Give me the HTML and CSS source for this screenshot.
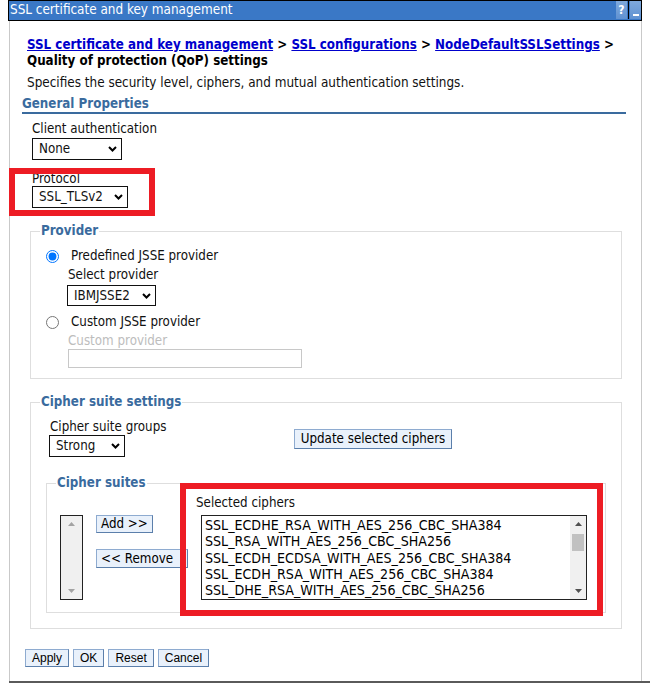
FILE: index.html
```html
<!DOCTYPE html>
<html>
<head>
<meta charset="utf-8">
<title>Quality of protection (QoP) settings</title>
<link rel="stylesheet" href="styles.css">
</head>
<body>
<div class="window">
  <div class="titlebar">
    <span class="title">SSL certificate and key management</span>
    <span class="tb-btns">
      <span class="tb-btn">?</span>
      <span class="tb-sep"></span>
      <span class="tb-btn"><span class="minbar"></span></span>
    </span>
  </div>
  <div class="content">
    <div class="crumbs"><a class="link">SSL certificate and key management</a> &gt; <a class="link">SSL configurations</a> &gt; <a class="link">NodeDefaultSSLSettings</a> &gt;<br><span class="cur">Quality of protection (QoP) settings</span></div>
    <p class="desc">Specifies the security level, ciphers, and mutual authentication settings.</p>
    <h2 class="section">General Properties</h2>

    <div class="field f-client">
      <div class="label">Client authentication</div>
      <div class="select w-none"><span>None</span><svg class="chev" width="9" height="6" viewBox="0 0 9 6"><path d="M1 1l3.5 3.5L8 1" fill="none" stroke="#000" stroke-width="2"/></svg></div>
    </div>

    <div class="field f-protocol">
      <div class="label">Protocol</div>
      <div class="select w-proto"><span>SSL_TLSv2</span><svg class="chev" width="9" height="6" viewBox="0 0 9 6"><path d="M1 1l3.5 3.5L8 1" fill="none" stroke="#000" stroke-width="2"/></svg></div>
      <div class="annot a1"></div>
    </div>

    <fieldset class="box provider">
      <legend>Provider</legend>
      <div class="radio-row"><input type="radio" name="prov" checked><span>Predefined JSSE provider</span></div>
      <div class="sub">
        <div class="label">Select provider</div>
        <div class="select w-ibm"><span>IBMJSSE2</span><svg class="chev" width="9" height="6" viewBox="0 0 9 6"><path d="M1 1l3.5 3.5L8 1" fill="none" stroke="#000" stroke-width="2"/></svg></div>
      </div>
      <div class="radio-row r2"><input type="radio" name="prov"><span>Custom JSSE provider</span></div>
      <div class="sub">
        <div class="label disabled">Custom provider</div>
        <div class="textbox"></div>
      </div>
    </fieldset>

    <fieldset class="box ciphers">
      <legend>Cipher suite settings</legend>
      <div class="groups-row">
        <div class="groups">
          <div class="label">Cipher suite groups</div>
          <div class="select w-strong"><span>Strong</span><svg class="chev" width="9" height="6" viewBox="0 0 9 6"><path d="M1 1l3.5 3.5L8 1" fill="none" stroke="#000" stroke-width="2"/></svg></div>
        </div>
        <button class="btn update">Update selected ciphers</button>
      </div>

      <fieldset class="box suites">
        <legend>Cipher suites</legend>
        <div class="suites-grid">
          <div class="listbox empty">
            <div class="sbar full">
              <svg class="arr" width="7" height="4" viewBox="0 0 7 4"><path d="M0 4h7L3.5 0z" fill="#a3a3a3"/></svg>
              <svg class="arr" width="7" height="4" viewBox="0 0 7 4"><path d="M0 0h7L3.5 4z" fill="#a3a3a3"/></svg>
            </div>
          </div>
          <div class="move-btns">
            <button class="btn small">Add &gt;&gt;</button>
            <button class="btn small remove">&lt;&lt; Remove</button>
          </div>
          <div class="selected-col">
            <div class="label">Selected ciphers</div>
            <div class="listbox sel">
              <div class="options">
                <div>SSL_ECDHE_RSA_WITH_AES_256_CBC_SHA384</div>
                <div>SSL_RSA_WITH_AES_256_CBC_SHA256</div>
                <div>SSL_ECDH_ECDSA_WITH_AES_256_CBC_SHA384</div>
                <div>SSL_ECDH_RSA_WITH_AES_256_CBC_SHA384</div>
                <div>SSL_DHE_RSA_WITH_AES_256_CBC_SHA256</div>
              </div>
              <div class="sbar">
                <svg class="arr" width="7" height="4" viewBox="0 0 7 4"><path d="M0 4h7L3.5 0z" fill="#505050"/></svg>
                <div class="thumb"></div>
                <svg class="arr" width="7" height="4" viewBox="0 0 7 4"><path d="M0 0h7L3.5 4z" fill="#505050"/></svg>
              </div>
            </div>
            <div class="annot a2"></div>
          </div>
        </div>
      </fieldset>
    </fieldset>

    <div class="actions">
      <button class="btn act">Apply</button>
      <button class="btn act">OK</button>
      <button class="btn act">Reset</button>
      <button class="btn act">Cancel</button>
    </div>
  </div>
</div>
<div class="bottomline"></div>
</body>
</html>
```

FILE: styles.css
```css
* { box-sizing: border-box; }
html, body { margin: 0; padding: 0; background: #fff; }
body {
  width: 650px;
  height: 683px;
  overflow: hidden;
  font-family: "DejaVu Sans Condensed", "DejaVu Sans", sans-serif;
  font-stretch: condensed;
  font-size: 13.25px;
  line-height: 16px;
  color: #111;
}

.window { margin-left: 8px; width: 634px; }

.titlebar {
  height: 21px;
  border: 1px solid #000;
  background: #3a78c6;
  display: flex;
  justify-content: space-between;
  color: #fff;
}
.title { padding-left: 1px; font-size: 13.4px; line-height: 18px; }
.tb-btns { display: flex; padding: 0 0 1px 0; }
.tb-btn {
  width: 11px;
  height: 18px;
  margin-left: 1px;
  background: linear-gradient(#7fa9dc, #6092d2);
  color: #fff;
  font-weight: bold;
  font-size: 12px;
  line-height: 18px;
  text-align: center;
  position: relative;
}
.tb-sep { width: 1px; background: #000; margin-left: 1px; }
.minbar { position: absolute; left: 3px; top: 13px; width: 6px; height: 2px; background: #fff; }

.content {
  margin-left: 1px;
  width: 633px;
  height: 660px;
  border-left: 1px solid #c9c9c9;
  border-right: 1px solid #c9c9c9;
  padding-top: 16px;
}

.crumbs { margin-left: 17px; font-weight: bold; font-size: 13.25px; line-height: 16px; color: #000; }
.link { color: #0000cc; text-decoration: underline; }
.desc { margin: 6px 0 0 17px; font-size: 13.4px; }
.section {
  margin: 5px 0 0 12px;
  width: 604px;
  font-size: 13.25px;
  line-height: 16px;
  font-weight: bold;
  color: #3a6b9e;
  border-bottom: 2px solid #3a6b9e;
}

.label { line-height: 16px; color: #111; }
.label.disabled { color: #bdbdbd; }

.field { margin-left: 22px; position: relative; }
.f-client { margin-top: 7px; }
.f-client .select { margin-top: 1px; }
.f-protocol { margin-top: 11px; }
.f-protocol .label { height: 15px; }

.select {
  height: 22px;
  border: 1px solid #111;
  background: #fff;
  display: flex;
  align-items: center;
  justify-content: space-between;
  padding: 0 4px 0 6px;
}
.w-none { width: 90px; }
.w-proto { width: 96px; }
.w-ibm { width: 89px; height: 21px; }
.w-strong { width: 76px; }

.annot { position: absolute; border: 6px solid #ed1c24; pointer-events: none; }
.a1 { left: -23px; top: -3px; width: 146px; height: 48px; }
.a2 { left: -16px; top: -12px; width: 423px; height: 133px; }

.box {
  margin: 0;
  border: 1px solid #dedede;
  padding: 0 0 0 9px;
  min-width: 0;
}
.box legend {
  padding: 0 1px;
  font-weight: bold;
  color: #3a6b9e;
  line-height: 16px;
}
.provider { margin: 15px 0 0 20px; width: 592px; padding-top: 9px; padding-bottom: 10px; }
.radio-row { display: flex; align-items: center; height: 16px; }
.radio-row input { margin: 0 12px 0 6px; width: 13px; height: 13px; }
.r2 { margin-top: 8px; }
.sub { margin-left: 28px; margin-top: 3px; }
.sub .select { margin-top: 2px; margin-left: -1px; }
.textbox { width: 234px; height: 19px; border: 1px solid #c8c8c8; background: #fff; }

.ciphers { margin: 15px 0 0 20px; width: 592px; padding-top: 9px; padding-bottom: 15px; }
.groups-row { display: flex; align-items: flex-start; }
.groups { margin-left: 10px; width: 244px; }
.groups .select { margin-left: -1px; }

.btn {
  font-family: "DejaVu Sans Condensed", "DejaVu Sans", sans-serif;
  font-stretch: condensed;
  font-size: 13.25px;
  color: #000;
  background: #e9f1fb;
  border: 1px solid;
  border-color: #8eabd0 #5b7fab #5b7fab #8eabd0;
  border-radius: 0;
  margin: 0;
  padding: 0 5px;
  line-height: 16px;
}
.update { margin-top: 10px; height: 20px; width: 158px; }

.suites { margin: 18px 0 0 6px; width: 560px; padding-top: 4px; padding-bottom: 12px; }
.suites-grid { display: flex; align-items: flex-end; }
.listbox { border: 1px solid #222; background: #fff; display: flex; }
.empty { margin-left: 4px; width: 23px; height: 85px; }
.sbar {
  width: 16px;
  background: #f0f0f0;
  display: flex;
  flex-direction: column;
  align-items: center;
  justify-content: space-between;
  padding: 6px 0 6px;
}
.sbar.full { width: 100%; }
.thumb { width: 12px; height: 17px; background: #c1c1c1; margin-top: 8px; margin-bottom: auto; }
.move-btns { margin-left: 13px; display: flex; flex-direction: column; align-items: flex-start; align-self: flex-end; height: 85px; gap: 16px; }
.small { height: 18px; padding: 0 4px; }
.remove { height: 19px; width: 92px; text-align: left; }
.selected-col { margin-left: 8px; position: relative; }
.selected-col .label { margin-bottom: 4px; }
.sel { margin-left: 5px; width: 386px; height: 85px; }
.options { flex: 1; padding: 1px 0 0 3px; font-size: 14.1px; line-height: 16.3px; color: #000; white-space: nowrap; overflow: hidden; }

.actions { margin: 20px 0 0 15px; display: flex; gap: 4px; }
.act {
  font-family: "Liberation Sans", Arial, sans-serif;
  font-stretch: normal;
  font-size: 12px;
  height: 18px;
  padding: 0 6px;
  line-height: 16px;
}

.bottomline { margin-left: 9px; width: 641px; height: 2px; background: #5a5a5a; }
```
